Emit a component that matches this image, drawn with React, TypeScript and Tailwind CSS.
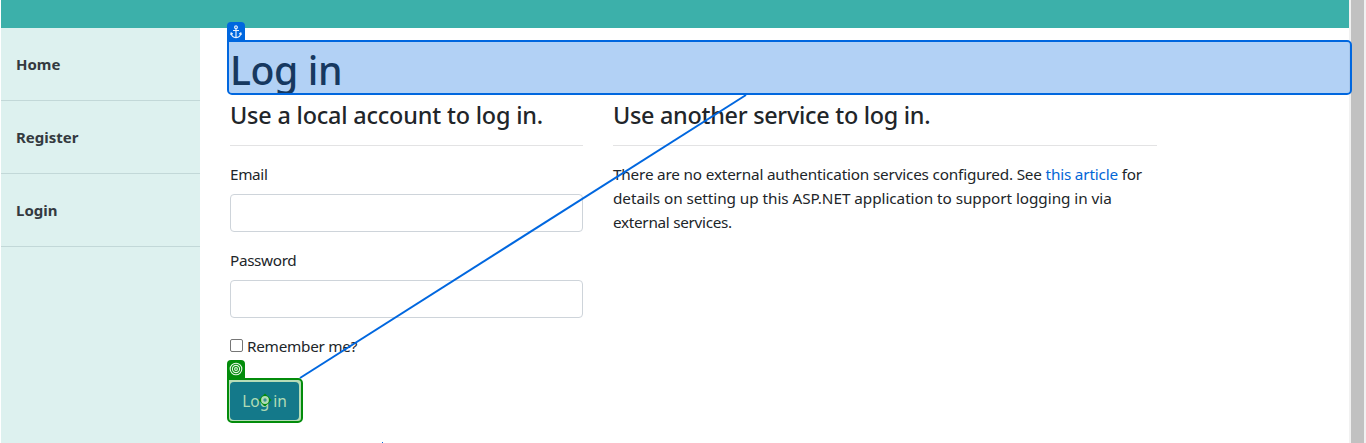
import React from "react";

const navItems = ["Home", "Register", "Login"];

function Field({ label, type }: { label: string; type: string }) {
  return (
    <div className="mb-4 h-[70px]">
      <label className="mb-2 block h-6 text-[15.3px] leading-6 tracking-[-0.35px]">{label}</label>
      <input
        type={type}
        aria-label={label}
        className="block h-[38px] w-full rounded border border-[#ced4da] bg-white px-3"
      />
    </div>
  );
}

function Header() {
  return <header className="h-7 bg-[#3cb0aa]" />;
}

function Sidebar() {
  return (
    <nav className="w-[199px] shrink-0 bg-[#ddf1ef]">
      {navItems.map((item) => (
        <a
          key={item}
          className="flex h-[73px] items-center border-b border-[#c2d8d8] pl-[15px] text-[15px] font-bold text-[#343a40]"
        >
          {item}
        </a>
      ))}
    </nav>
  );
}

function AnchorMark() {
  return (
    <svg width="12" height="14" viewBox="0 0 12 14" fill="none" stroke="#e4effd" strokeWidth="1.2">
      <circle cx="6" cy="2.3" r="1.4" />
      <path d="M6 3.8V12.5M3 5.5H9M1.1 8.2C1.4 10.8 3.2 12.4 6 12.6C8.8 12.4 10.6 10.8 10.9 8.2M0.5 9.8L1.2 8L2.8 9M11.5 9.8L10.8 8L9.2 9" />
    </svg>
  );
}

function TargetMark() {
  return (
    <svg className="-mt-px" width="14" height="14" viewBox="0 0 14 14" fill="none" stroke="#e4f5e4" strokeWidth="1.1">
      <circle cx="7" cy="7" r="5.8" />
      <circle cx="7" cy="7" r="3.6" />
      <circle cx="7" cy="7" r="1.4" />
    </svg>
  );
}

function Overlay() {
  return (
    <div className="pointer-events-none absolute inset-0">
      <div className="absolute top-10 left-[227px] h-[55px] w-[1125px] rounded-[5px] rounded-tl-none border-2 border-[#0067df] bg-[#0067df]/30 bg-clip-padding" />
      <div className="absolute top-[22px] left-[227px] flex h-[19px] w-[18px] items-center justify-center rounded-t-[4px] bg-[#0067df]">
        <AnchorMark />
      </div>
      <svg className="absolute inset-0" width="1366" height="443" viewBox="0 0 1366 443">
        <path d="M746 95L300 378" stroke="#0067df" strokeWidth="2" />
      </svg>
      <div className="absolute top-[378px] left-[227px] h-[45px] w-[76px] rounded-[5px] rounded-tl-none border-2 border-[#038c0b]" />
      <div className="absolute top-[360px] left-[227px] flex h-[19px] w-[18px] items-center justify-center rounded-t-[4px] bg-[#038c0b]">
        <TargetMark />
      </div>
      <svg className="absolute top-[393px] left-[258px]" width="14" height="14" viewBox="0 0 14 14">
        <path
          d="M7 .5L9 2.5A5 5 0 0 1 11.5 5L13.5 7L11.5 9A5 5 0 0 1 9 11.5L7 13.5L5 11.5A5 5 0 0 1 2.5 9L.5 7L2.5 5A5 5 0 0 1 5 2.5Z"
          fill="#038c0b"
        />
        <circle cx="7" cy="7" r="2.8" fill="#3a8f96" stroke="#b0dcb4" strokeWidth="2.2" />
      </svg>
      <div className="absolute top-[442px] left-[382px] h-px w-px bg-[#0067df]" />
    </div>
  );
}

export default function App() {
  return (
    <div className="relative flex h-[443px] w-[1366px] overflow-hidden bg-white pl-px font-['Noto_Sans',sans-serif] text-[#212529]">
      <div className="flex w-[1348px] shrink-0 flex-col">
        <Header />
        <div className="flex min-h-0 flex-1">
          <Sidebar />
          <main className="min-w-0 flex-1 pt-[18px] pl-[30px]">
            <h1 className="h-12 text-[39.2px] leading-[48px] font-medium tracking-[-0.4px] whitespace-nowrap">Log in</h1>
            <div className="flex gap-[30px] pt-[7px]">
              <section className="w-[353px]">
                <h2 className="h-[29px] text-[23.4px] leading-7 font-medium tracking-[-0.18px] whitespace-nowrap">
                  Use a local account to log in.
                </h2>
                <hr className="mt-[15px] mb-4 border-[#e3e3e4]" />
                <Field label="Email" type="email" />
                <Field label="Password" type="password" />
                <label className="flex h-6 items-center text-[15.3px] leading-6 tracking-[-0.27px]">
                  <input
                    type="checkbox"
                    className="mr-1 mb-0.5 h-[13px] w-[13px] appearance-none rounded-[2px] border border-[#767676] bg-white"
                  />
                  Remember me?
                </label>
                <div className="mt-[22px] -ml-px h-[41px] w-[72px] bg-[#b6dcb7] pt-0.5 pl-px">
                  <button className="block h-[38px] w-[69px] rounded bg-[#14798a] text-[15.5px] leading-6 text-[#b1dcb5]">
                    Log in
                  </button>
                </div>
              </section>
              <section className="w-[544px]">
                <h2 className="h-[29px] text-[23.4px] leading-7 font-medium tracking-[-0.28px] whitespace-nowrap">
                  Use another service to log in.
                </h2>
                <hr className="mt-[15px] mb-4 border-[#e3e3e4]" />
                <p className="text-[15.3px] leading-6 whitespace-nowrap">
                  <span className="tracking-[-0.18px]">
                    There are no external authentication services configured. See <a className="text-[#0366d6]">this article</a> for
                  </span>
                  <br />
                  <span className="tracking-[-0.05px]">details on setting up this ASP.NET application to support logging in via</span>
                  <br />
                  <span className="tracking-[-0.3px]">external services.</span>
                </p>
              </section>
            </div>
          </main>
        </div>
      </div>
      <div className="w-[17px] shrink-0 border-x-2 border-[#f1f1f1] bg-[#c1c1c1]" />
      <Overlay />
    </div>
  );
}
